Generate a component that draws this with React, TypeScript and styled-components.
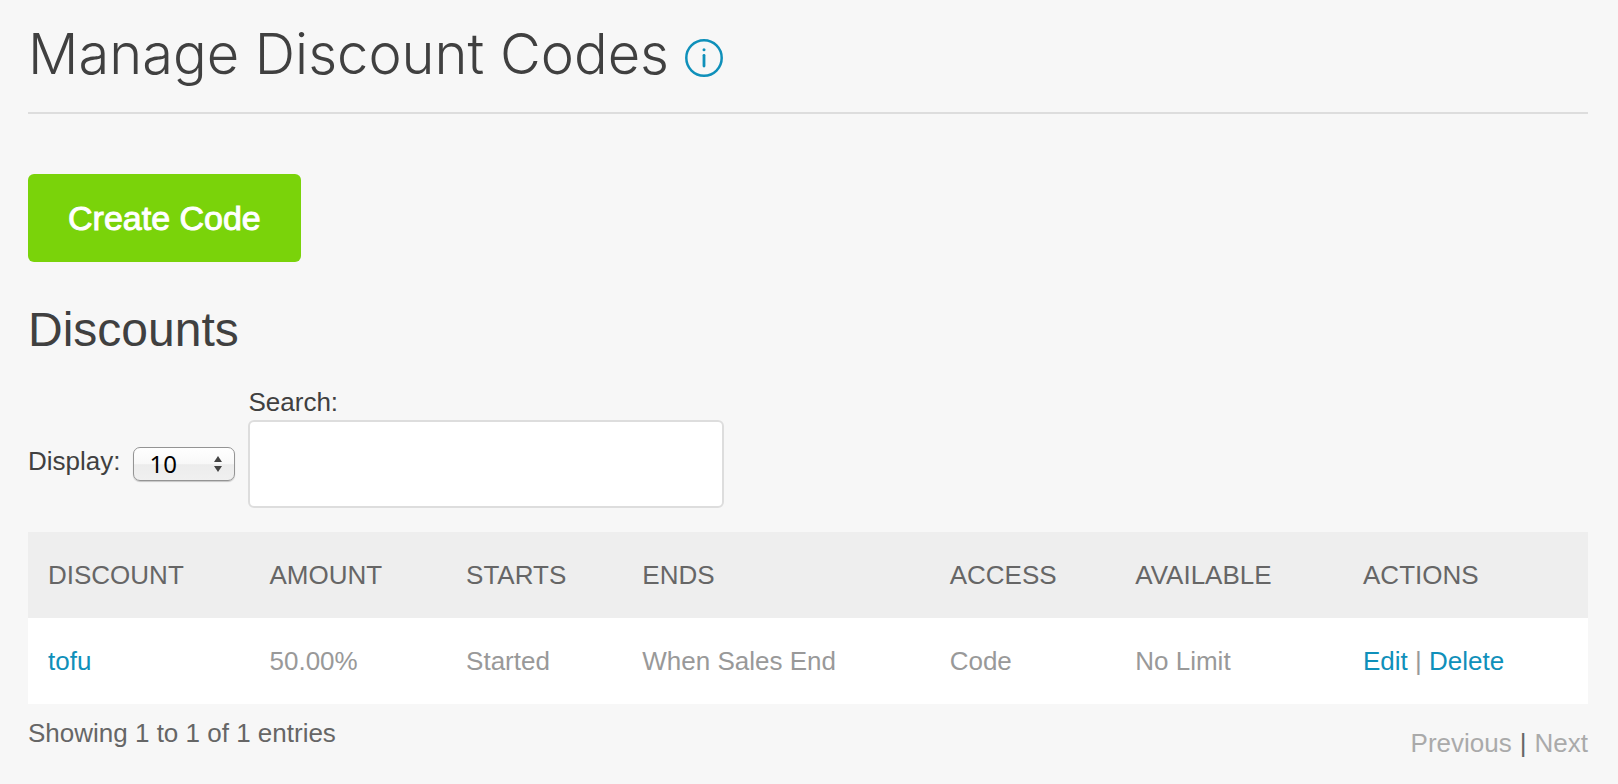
import React, { useState } from "react";
import styled, { createGlobalStyle } from "styled-components";

const GlobalStyle = createGlobalStyle`
  * { box-sizing: border-box; }
  body {
    margin: 0;
    background: #f7f7f7;
    color: #404040;
    font-family: "Liberation Sans", Arial, sans-serif;
    font-size: 26px;
    line-height: 36px;
  }
`;

const Page = styled.main`
  padding: 16px 30px 20px 28px;
`;

const TitleBar = styled.header`
  display: flex;
  align-items: center;
  gap: 16px;
  padding-bottom: 20px;
  border-bottom: 2px solid #dddddd;
`;

const Title = styled.h1`
  margin: 0;
  font-family: Inter, "Liberation Sans", sans-serif;
  font-size: 56px;
  line-height: 76px;
  font-weight: 300;
`;

const InfoButton = styled.button`
  display: flex;
  margin-top: 8px;
  padding: 0;
  border: 0;
  background: none;
  color: #0f90ba;
`;

const CreateButton = styled.button`
  display: block;
  margin: 60px 0 40px;
  height: 88px;
  padding: 0 40px;
  border: 0;
  border-radius: 6px;
  background: #7ad30a;
  color: #ffffff;
  font: inherit;
  font-size: 34px;
  -webkit-text-stroke: 1px #ffffff;
`;

const SectionTitle = styled.h2`
  margin: 0;
  font-size: 48px;
  line-height: 56px;
  font-weight: 400;
`;

const Filters = styled.form`
  display: flex;
  align-items: flex-end;
  gap: 13px;
  margin: 26px 0 24px;
`;

const DisplayField = styled.div`
  display: flex;
  align-items: center;
  gap: 13px;
  padding-bottom: 23px;
`;

const DisplayLabel = styled.label`
  padding-bottom: 6px;
`;

const SelectWrap = styled.div`
  display: grid;
  align-items: center;
  width: 102px;

  & > * { grid-area: 1 / 1; }
  svg { justify-self: end; margin-right: 13px; pointer-events: none; }
`;

const Select = styled.select`
  appearance: none;
  height: 34px;
  width: 100%;
  padding: 0 15px;
  border: 1px solid #949494;
  border-radius: 7px;
  background: linear-gradient(#ffffff 0%, #f8f8f8 50%, #ececec 52%, #f0f0f0 100%);
  box-shadow: 0 1px 1px #00000033;
  color: #000000;
  font-family: "Noto Sans", sans-serif;
  font-size: 24px;
  line-height: 30px;
`;

const SearchField = styled.div`
  display: flex;
  flex-direction: column;
`;

const SearchInput = styled.input`
  width: 476px;
  height: 88px;
  padding: 0 20px;
  border: 2px solid #dddddd;
  border-radius: 6px;
  background: #ffffff;
  color: inherit;
  font: inherit;
`;

const Table = styled.table`
  width: 100%;
  table-layout: fixed;
  border-collapse: collapse;
  text-align: left;
`;

const Column = styled.col<{ $share: number }>`
  width: ${(p) => p.$share}%;
`;

const HeadCell = styled.th`
  height: 86px;
  padding: 0 20px;
  background: #eeeeee;
  color: #666666;
  font-weight: 400;
  white-space: nowrap;
`;

const Cell = styled.td`
  height: 86px;
  padding: 0 20px;
  background: #ffffff;
  color: #999999;
  white-space: nowrap;
`;

const Link = styled.a`
  color: #0f90ba;
  text-decoration: none;
`;

const Footer = styled.footer`
  display: flex;
  justify-content: space-between;
  padding-top: 11px;
  color: #666666;
`;

const Pager = styled.nav`
  display: flex;
  gap: 8px;
  margin-top: 10px;
`;

const PageButton = styled.button`
  padding: 0;
  border: 0;
  background: none;
  color: #aaaaaa;
  font: inherit;
`;

const columns = [
  { label: "DISCOUNT", share: 14.2 },
  { label: "AMOUNT", share: 12.6 },
  { label: "STARTS", share: 11.3 },
  { label: "ENDS", share: 19.7 },
  { label: "ACCESS", share: 11.9 },
  { label: "AVAILABLE", share: 14.6 },
  { label: "ACTIONS", share: 15.7 },
];

const discounts = [
  { name: "tofu", amount: "50.00%", starts: "Started", ends: "When Sales End", access: "Code", available: "No Limit" },
];

export default function App() {
  const [size, setSize] = useState("10");
  const [query, setQuery] = useState("");

  return (
    <>
      <GlobalStyle />
      <Page>
        <TitleBar>
          <Title>Manage Discount Codes</Title>
          <InfoButton type="button" aria-label="About discount codes">
            <svg width="38" height="38" viewBox="0 0 38 38" fill="none" stroke="currentColor">
              <circle cx="19" cy="19" r="17.7" strokeWidth="2.5" />
              <path d="M19 16.3V27" strokeWidth="2.8" strokeLinecap="round" />
              <circle cx="19" cy="10.8" r="1.5" fill="currentColor" stroke="none" />
            </svg>
          </InfoButton>
        </TitleBar>

        <CreateButton type="button">Create Code</CreateButton>

        <SectionTitle>Discounts</SectionTitle>
        <Filters onSubmit={(e) => e.preventDefault()}>
          <DisplayField>
            <DisplayLabel htmlFor="display">Display:</DisplayLabel>
            <SelectWrap>
              <Select id="display" value={size} onChange={(e) => setSize(e.target.value)}>
                <option>10</option>
                <option>25</option>
                <option>50</option>
              </Select>
              <svg width="8" height="16" viewBox="0 0 8 16" fill="#444444">
                <path d="M4 0L8 6H0Z" />
                <path d="M0 10H8L4 16Z" />
              </svg>
            </SelectWrap>
          </DisplayField>
          <SearchField>
            <label htmlFor="search">Search:</label>
            <SearchInput id="search" type="text" value={query} onChange={(e) => setQuery(e.target.value)} />
          </SearchField>
        </Filters>

        <Table>
          <colgroup>
            {columns.map((c) => <Column key={c.label} $share={c.share} />)}
          </colgroup>
          <thead>
            <tr>
              {columns.map((c) => <HeadCell key={c.label} scope="col">{c.label}</HeadCell>)}
            </tr>
          </thead>
          <tbody>
            {discounts.map((d) => (
              <tr key={d.name}>
                <Cell><Link href="#tofu">{d.name}</Link></Cell>
                <Cell>{d.amount}</Cell>
                <Cell>{d.starts}</Cell>
                <Cell>{d.ends}</Cell>
                <Cell>{d.access}</Cell>
                <Cell>{d.available}</Cell>
                <Cell>
                  <Link href="#edit">Edit</Link> | <Link href="#delete">Delete</Link>
                </Cell>
              </tr>
            ))}
          </tbody>
        </Table>

        <Footer>
          <span>Showing 1 to 1 of 1 entries</span>
          <Pager aria-label="Pages">
            <PageButton type="button">Previous</PageButton>
            <span>|</span>
            <PageButton type="button">Next</PageButton>
          </Pager>
        </Footer>
      </Page>
    </>
  );
}
